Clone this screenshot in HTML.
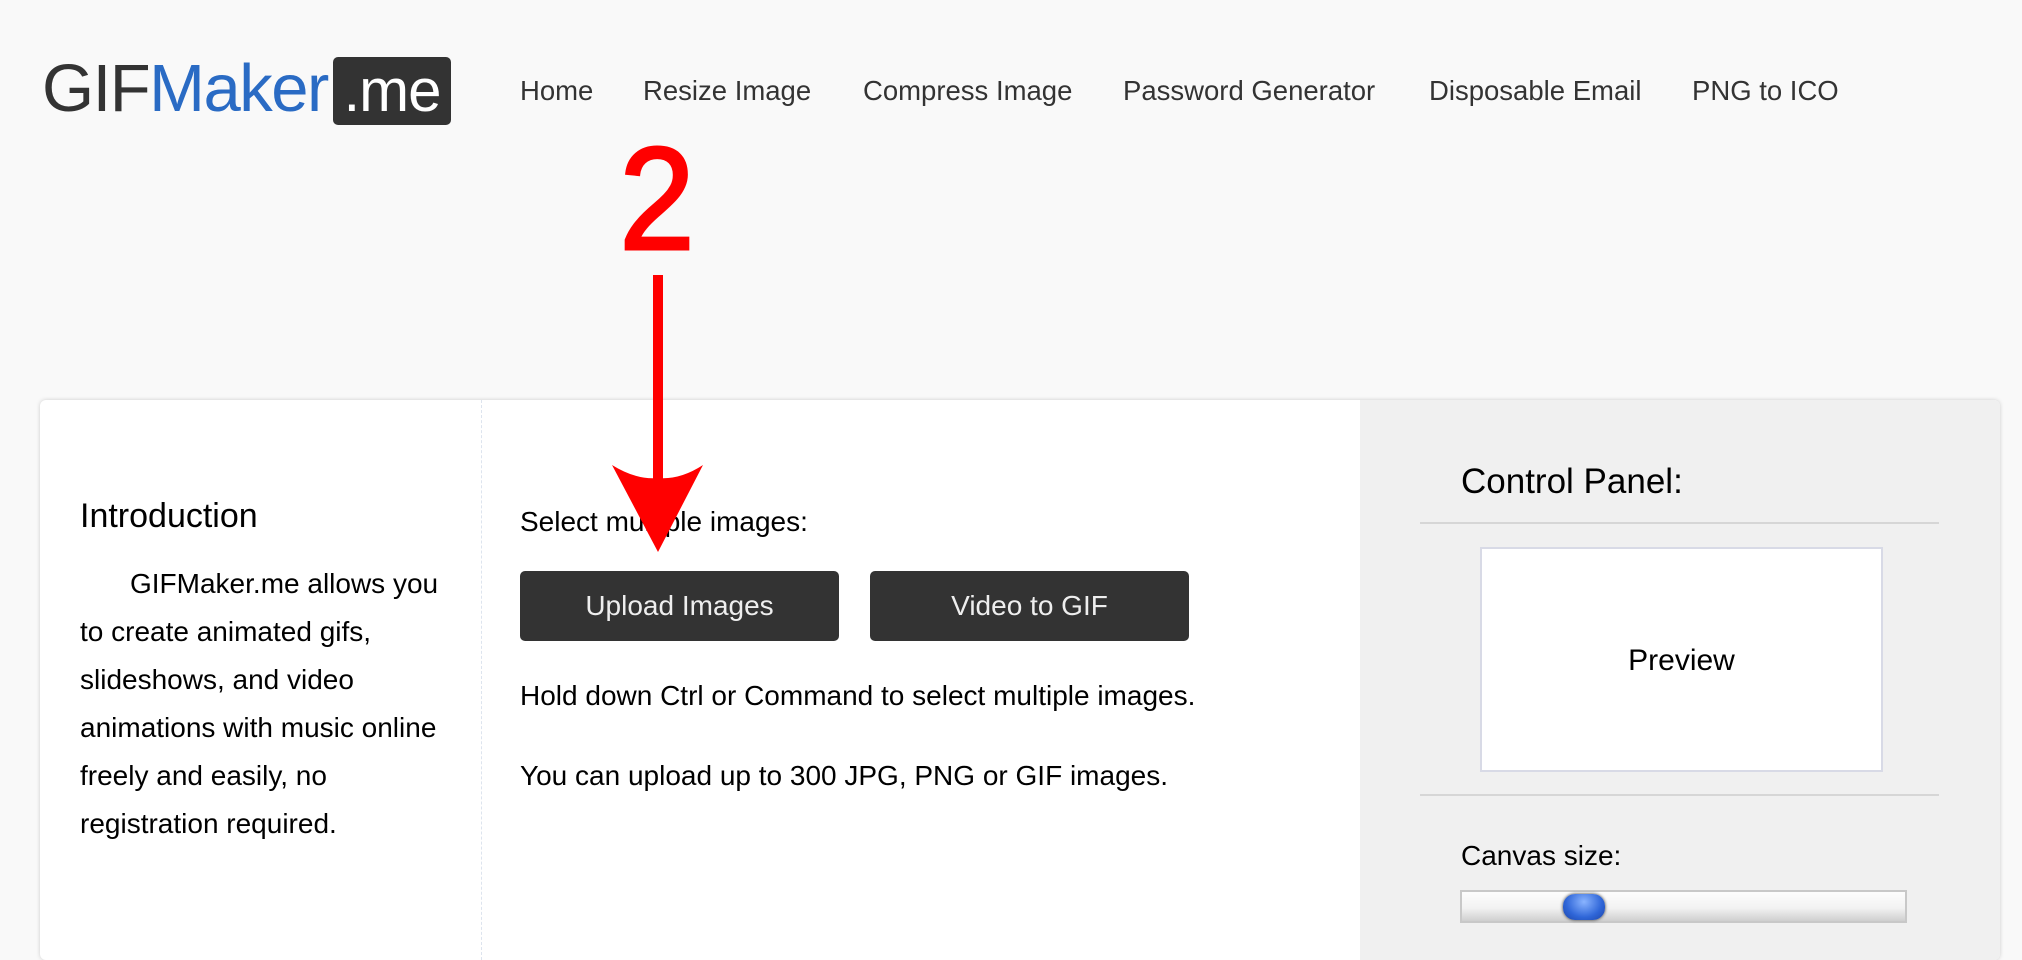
<!DOCTYPE html>
<html><head><meta charset="utf-8"><style>
*{margin:0;padding:0;box-sizing:border-box}
body{width:2022px;height:936px;overflow:hidden;background:#f9f9f9;font-family:"Liberation Sans",Arial,sans-serif;color:#000;position:relative}
.a{position:absolute;white-space:nowrap}
.logo{left:42px;top:49px;font-size:67px;color:#333;letter-spacing:-1.5px;line-height:80px}
.logo .b{color:#2a6bc4}
.me{left:333px;top:57px;width:118px;height:68px;background:#333;border-radius:5px;color:#fff;font-size:60px;line-height:68px;text-align:center;letter-spacing:-1px}
.nav{top:73px;font-size:27.5px;color:#333;line-height:36px}
.card{left:40px;top:400px;width:1960px;height:560px;background:#fff;border-radius:6px;box-shadow:0 0 4px rgba(0,0,0,.18);overflow:hidden}
.div{left:441px;top:0;width:0;height:560px;border-left:1px dashed #dde4ee}
.gray{left:1320px;top:0;width:640px;height:560px;background:#f0f0f0}
.t{font-size:28px;line-height:48px}
.btn{width:319px;height:70px;background:#333;border-radius:5px;color:#eee;font-size:28px;line-height:70px;text-align:center}
.hr{height:2px;background:#d6d6d6}
</style></head><body>
<div class="a logo">GIF<span class="b">Maker</span></div>
<div class="a me">.me</div>
<div class="a nav" style="left:520px">Home</div>
<div class="a nav" style="left:643px">Resize Image</div>
<div class="a nav" style="left:863px">Compress Image</div>
<div class="a nav" style="left:1123px">Password Generator</div>
<div class="a nav" style="left:1429px">Disposable Email</div>
<div class="a nav" style="left:1692px">PNG to ICO</div>

<div class="a card">
 <div class="a div"></div>
 <div class="a gray"></div>
 <div class="a" style="left:40px;top:94px;font-size:34px;line-height:44px">Introduction</div>
 <div class="a t" style="left:40px;top:160px;white-space:normal;width:370px;text-indent:50px">GIFMaker.me allows you to create animated gifs, slideshows, and video animations with music online freely and easily, no registration required.</div>
 <div class="a t" style="left:480px;top:98px">Select multiple images:</div>
 <div class="a btn" style="left:480px;top:171px">Upload Images</div>
 <div class="a btn" style="left:830px;top:171px">Video to GIF</div>
 <div class="a t" style="left:480px;top:272px">Hold down Ctrl or Command to select multiple images.</div>
 <div class="a t" style="left:480px;top:352px">You can upload up to 300 JPG, PNG or GIF images.</div>
 <div class="a" style="left:1421px;top:60px;font-size:35px;line-height:44px">Control Panel:</div>
 <div class="a hr" style="left:1380px;top:122px;width:519px"></div>
 <div class="a" style="left:1440px;top:147px;width:403px;height:225px;background:#fff;border:2px solid #d8dae6;font-size:30px;line-height:223px;text-align:center">Preview</div>
 <div class="a hr" style="left:1380px;top:394px;width:519px"></div>
 <div class="a" style="left:1421px;top:438px;font-size:28px;line-height:36px">Canvas size:</div>
 <div class="a" style="left:1420px;top:490px;width:447px;height:33px;border:2px solid #c8c8c8;background:linear-gradient(#fdfdfd,#f2f2f2 55%,#cfcfcf)"></div>
 <div class="a" style="left:1523px;top:494px;width:42px;height:26px;border-radius:12px;background:radial-gradient(ellipse at 50% 30%,#8ab4ff,#2f66d8 60%,#1d45a8);box-shadow:0 0 3px #333"></div>
</div>

<svg class="a" style="left:0;top:0" width="2022" height="936">
 <text x="657" y="249" font-family="Liberation Sans,sans-serif" font-size="146" fill="#ff0000" stroke="#ff0000" stroke-width="3" text-anchor="middle" transform="translate(657 0) scale(0.93 1) translate(-657 0)">2</text>
 <rect x="653" y="275" width="10" height="220" fill="#ff0000"/>
 <path d="M658 552 L612 465 Q636 480 658 478 Q680 480 703 465 Z" fill="#ff0000"/>
</svg>
</body></html>
